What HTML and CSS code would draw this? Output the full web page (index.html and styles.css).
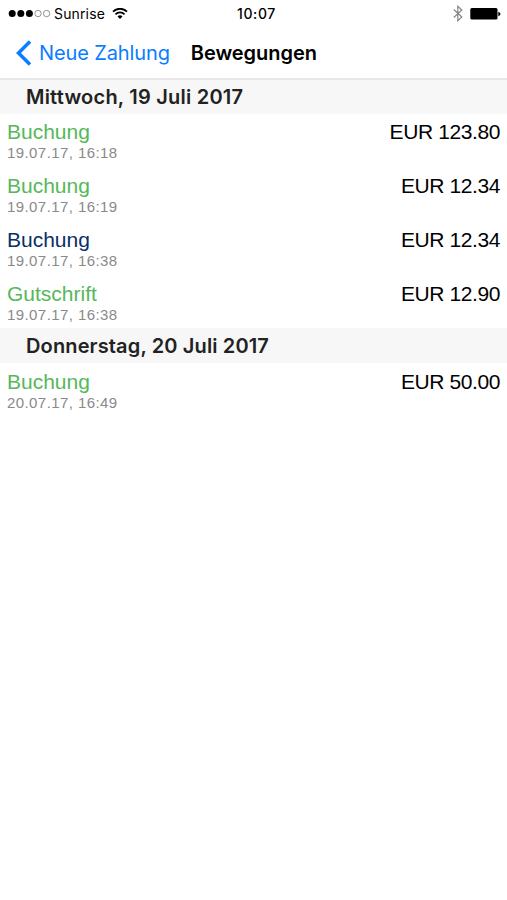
FILE: index.html
```
<!DOCTYPE html>
<html lang="de">
<head>
  <meta charset="UTF-8">
  <meta name="viewport" content="width=device-width, initial-scale=1.0">
  <title>Bewegungen</title>
  <link rel="stylesheet" href="styles.css">
</head>
<body>
  <div class="status-bar">
    <div class="carrier">
      <svg class="signal" width="43" height="10" viewBox="0 0 43 10">
        <circle cx="4.2" cy="4.5" r="3.5"/>
        <circle cx="12.8" cy="4.5" r="3.5"/>
        <circle cx="21.4" cy="4.5" r="3.5"/>
        <circle class="empty" cx="30" cy="4.5" r="3.2"/>
        <circle class="empty" cx="38.6" cy="4.5" r="3.2"/>
      </svg>
      <span class="carrier-name">Sunrise</span>
      <svg class="wifi" width="16" height="12" viewBox="0 0 16 12">
        <path d="M1 3.6a10 10 0 0 1 14 0M3.5 6.3a6.4 6.4 0 0 1 9 0"/>
        <path class="dot" d="M5.5 8.5a3.6 3.6 0 0 1 5 0L8 11.1z"/>
      </svg>
    </div>
    <span class="time">10:07</span>
    <div class="battery-box">
      <svg class="bluetooth" width="10" height="17" viewBox="0 0 10 17">
        <path d="M.8 4.5l8 7.5-4 3.7V1.3l4 3.7-8 7.5"/>
      </svg>
      <svg class="battery" width="31" height="12" viewBox="0 0 31 12">
        <rect x="0.3" y="0" width="27.2" height="11.5" rx="1.5"/>
        <path d="M28.3 3.8Q30.5 4.5 30.5 6T28.3 8.2z"/>
      </svg>
    </div>
  </div>
  <header class="nav-bar">
    <a class="back" href="#">
      <svg width="16" height="26" viewBox="0 0 16 26">
        <path d="M14 1.5L2.5 13 14 24.5"/>
      </svg>
      <span>Neue Zahlung</span>
    </a>
    <h1>Bewegungen</h1>
  </header>
  <main>
    <h2>Mittwoch, 19 Juli 2017</h2>
    <div class="row">
      <div><div class="type">Buchung</div><div class="date">19.07.17, 16:18</div></div>
      <div class="amount">EUR 123.80</div>
    </div>
    <div class="row">
      <div><div class="type">Buchung</div><div class="date">19.07.17, 16:19</div></div>
      <div class="amount">EUR 12.34</div>
    </div>
    <div class="row">
      <div><div class="type blue">Buchung</div><div class="date">19.07.17, 16:38</div></div>
      <div class="amount">EUR 12.34</div>
    </div>
    <div class="row">
      <div><div class="type">Gutschrift</div><div class="date">19.07.17, 16:38</div></div>
      <div class="amount">EUR 12.90</div>
    </div>
    <h2 class="second">Donnerstag, 20 Juli 2017</h2>
    <div class="row">
      <div><div class="type">Buchung</div><div class="date">20.07.17, 16:49</div></div>
      <div class="amount">EUR 50.00</div>
    </div>
  </main>
</body>
</html>
```

FILE: styles.css
```
body {
  margin: 0;
  min-height: 900px;
  background-color: #ffffff;
  color: #000000;
  font-family: 'Liberation Sans', Arial, sans-serif;
}
.status-bar {
  display: grid;
  grid-template-columns: 1fr auto 1fr;
  align-items: center;
  height: 27px;
  padding: 0 6px 0 8px;
  font-family: 'Inter', sans-serif;
  font-size: 14px;
}
.carrier {
  display: flex;
  align-items: center;
}
.carrier-name {
  margin: 0 7px 0 3px;
  letter-spacing: 0.15px;
}
.wifi {
  fill: none;
  stroke: #000000;
  stroke-width: 1.8;
}
.empty {
  fill: none;
  stroke: #777777;
  stroke-width: 0.8;
}
.wifi .dot {
  fill: #000000;
  stroke: none;
}
.time {
  padding-left: 4px;
  font-weight: 500;
  letter-spacing: 0.6px;
}
.battery-box {
  display: flex;
  align-items: center;
  justify-content: flex-end;
  gap: 7px;
}
.bluetooth {
  fill: none;
  stroke: #858585;
  stroke-width: 1.2;
}
.nav-bar {
  display: flex;
  align-items: center;
  box-sizing: border-box;
  height: 52.6px;
  padding: 1px 0 0 16px;
  border-bottom: 2px solid #e7e7e7;
}
.back {
  display: flex;
  align-items: center;
  gap: 7px;
  color: #0a7cff;
  font-family: 'Inter', sans-serif;
  font-size: 20px;
  letter-spacing: -0.12px;
  text-decoration: none;
}
.back svg {
  fill: none;
  stroke: #0a7cff;
  stroke-width: 3.5;
}
h1 {
  margin: 0 0 0 21px;
  font-family: 'Inter', sans-serif;
  font-size: 20px;
  font-weight: 600;
  letter-spacing: -0.05px;
}
h2 {
  height: 34px;
  margin: 0;
  padding-left: 26px;
  background-color: #f7f7f7;
  color: #222222;
  font-family: 'Inter', sans-serif;
  font-size: 20px;
  font-weight: 600;
  letter-spacing: 0.22px;
  line-height: 34px;
}
h2.second {
  height: 35px;
  margin-top: -1px;
  letter-spacing: 0.14px;
  line-height: 36px;
}
.row {
  display: flex;
  justify-content: space-between;
  box-sizing: border-box;
  height: 53.85px;
  padding: 6.8px 7px 0;
}
.type {
  color: #56b85a;
  font-size: 21px;
  line-height: 24px;
}
.type.blue {
  color: #0b2f66;
}
.date {
  color: #8a8a8a;
  font-size: 15px;
  letter-spacing: 0.42px;
  line-height: 17px;
}
.amount {
  font-size: 21px;
  letter-spacing: -0.4px;
  line-height: 24px;
}
```
